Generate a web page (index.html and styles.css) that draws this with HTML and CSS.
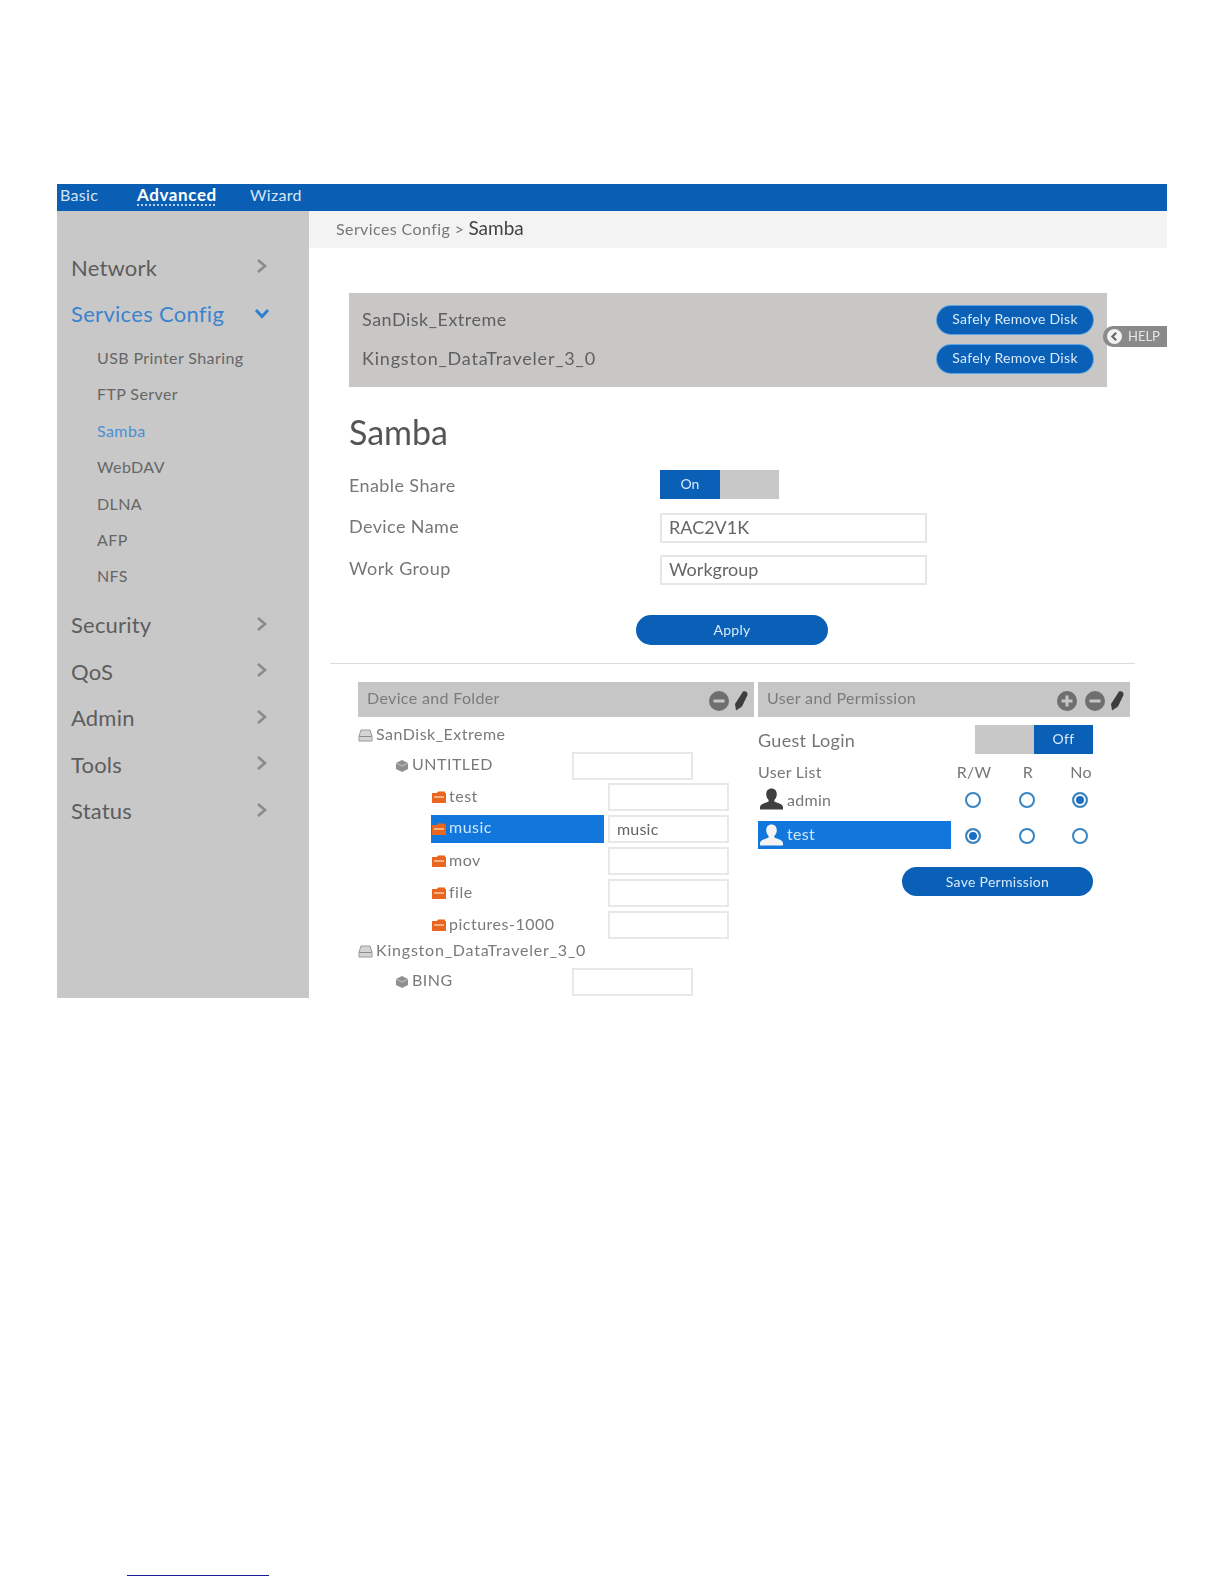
FILE: index.html
```html
<!DOCTYPE html>
<html lang="en">
<head>
<meta charset="utf-8">
<title>Samba</title>
<link rel="stylesheet" href="styles.css">
</head>
<body>
<svg class="defs" width="0" height="0" aria-hidden="true">
  <defs>
    <symbol id="i-right" viewBox="0 0 12 16"><path d="M2 2l7 6-7 6" fill="none" stroke="#8a8a8a" stroke-width="2.6"/></symbol>
    <symbol id="i-down" viewBox="0 0 16 12"><path d="M2 2l6 6.5L14 2" fill="none" stroke="#2f7fd0" stroke-width="3"/></symbol>
    <symbol id="i-disk" viewBox="0 0 15 13"><path d="M3 1h9l2 6v5H1V7z" fill="#d4d4d4" stroke="#9a9a9a"/><path d="M1.5 7.5h12" stroke="#8c8c8c"/></symbol>
    <symbol id="i-vol" viewBox="0 0 14 14"><path d="M7 1l6 3v6l-6 3-6-3V4z" fill="#8f8f8f"/><path d="M1 4l6 3 6-3" fill="none" stroke="#c4c4c4"/></symbol>
    <symbol id="i-folder" viewBox="0 0 14 12"><path d="M0 2h5l1-1.500h7V2h1v10H0z" fill="#e8661f"/><rect x="2" y="5" width="10" height="2" fill="#f6b27c"/></symbol>
    <symbol id="i-minus" viewBox="0 0 20 20"><circle cx="10" cy="10" r="10" fill="#6f6f6f"/><rect x="4.500" y="8.500" width="11" height="3" fill="#c6c6c6"/></symbol>
    <symbol id="i-plus" viewBox="0 0 20 20"><circle cx="10" cy="10" r="10" fill="#6f6f6f"/><path d="M4.500 8.500h4v-4h3v4h4v3h-4v4h-3v-4h-4z" fill="#c6c6c6"/></symbol>
    <symbol id="i-pen" viewBox="0 0 14 20"><path d="M9 .5c2.500-1 5 .5 4.500 3.500L8 15.500 2 19.500 1 13z" fill="#3d3d3d"/></symbol>
    <symbol id="i-user" viewBox="0 0 24 22"><path d="M12 0c3.500 0 5.500 2.500 5.500 6 0 2.500-1 4.500-2.500 6v1.500c3 1.500 8 2 9 5.500v3H0v-3c1-3.500 6-4 9-5.500V12C7.500 10.500 6.500 8.500 6.500 6c0-3.500 2-6 5.500-6z"/></symbol>
    <symbol id="i-back" viewBox="0 0 18 18"><circle cx="9" cy="9" r="9" fill="#f2f2f2"/><path d="M11 4.500L6.500 9l4.500 4.500" fill="none" stroke="#6a6a6a" stroke-width="2.800"/></symbol>
  </defs>
</svg>
<div class="page">
  <nav class="topbar">
    <a class="tab tab-basic">Basic</a>
    <a class="tab tab-advanced"><span>Advanced</span></a>
    <a class="tab">Wizard</a>
  </nav>
  <div class="main">
    <aside class="sidebar">
      <div class="nav-item"><span>Network</span><svg class="chev"><use href="#i-right"/></svg></div>
      <div class="nav-item nav-open"><span>Services Config</span><svg class="chev-down"><use href="#i-down"/></svg></div>
      <ul class="subnav">
        <li>USB Printer Sharing</li>
        <li>FTP Server</li>
        <li class="sub-active">Samba</li>
        <li>WebDAV</li>
        <li>DLNA</li>
        <li>AFP</li>
        <li>NFS</li>
      </ul>
      <div class="nav-item"><span>Security</span><svg class="chev"><use href="#i-right"/></svg></div>
      <div class="nav-item"><span>QoS</span><svg class="chev"><use href="#i-right"/></svg></div>
      <div class="nav-item"><span>Admin</span><svg class="chev"><use href="#i-right"/></svg></div>
      <div class="nav-item"><span>Tools</span><svg class="chev"><use href="#i-right"/></svg></div>
      <div class="nav-item"><span>Status</span><svg class="chev"><use href="#i-right"/></svg></div>
    </aside>
    <main class="content">
      <div class="crumbs"><span class="crumb-parent">Services Config &gt;</span> <span class="crumb-current">Samba</span></div>
      <div class="help"><svg class="help-icon"><use href="#i-back"/></svg>HELP</div>
      <section class="disks">
        <div class="disk-row"><span class="disk-name">SanDisk_Extreme</span><button class="pill pill-disk">Safely Remove Disk</button></div>
        <div class="disk-row"><span class="disk-name long-name">Kingston_DataTraveler_3_0</span><button class="pill pill-disk">Safely Remove Disk</button></div>
      </section>
      <h1 class="title">Samba</h1>
      <div class="form">
        <label class="label-first">Enable Share</label>
        <div class="toggle toggle-share"><span class="toggle-on">On</span><span class="toggle-rest"></span></div>
        <label>Device Name</label>
        <div class="field">RAC2V1K</div>
        <label>Work Group</label>
        <div class="field">Workgroup</div>
      </div>
      <button class="pill pill-apply">Apply</button>
      <hr class="divider">
      <div class="panels">
        <section class="panel-left">
          <header class="panel-head"><span class="head-text">Device and Folder</span><span class="head-icons"><svg class="ic-round"><use href="#i-minus"/></svg><svg class="ic-pen"><use href="#i-pen"/></svg></span></header>
          <div class="tree">
            <div class="tree-disk"><svg class="ic-disk"><use href="#i-disk"/></svg>SanDisk_Extreme</div>
            <div class="tree-vol"><svg class="ic-vol"><use href="#i-vol"/></svg>UNTITLED<span class="box"></span></div>
            <div class="tree-folder"><span class="f-name"><svg class="ic-folder"><use href="#i-folder"/></svg>test</span><span class="box"></span></div>
            <div class="tree-folder"><span class="f-name f-selected"><svg class="ic-folder"><use href="#i-folder"/></svg>music</span><span class="box">music</span></div>
            <div class="tree-folder"><span class="f-name"><svg class="ic-folder"><use href="#i-folder"/></svg>mov</span><span class="box"></span></div>
            <div class="tree-folder"><span class="f-name"><svg class="ic-folder"><use href="#i-folder"/></svg>file</span><span class="box"></span></div>
            <div class="tree-folder"><span class="f-name"><svg class="ic-folder"><use href="#i-folder"/></svg>pictures-1000</span><span class="box"></span></div>
            <div class="tree-disk long-name"><svg class="ic-disk"><use href="#i-disk"/></svg>Kingston_DataTraveler_3_0</div>
            <div class="tree-vol"><svg class="ic-vol"><use href="#i-vol"/></svg>BING<span class="box"></span></div>
          </div>
        </section>
        <section class="panel-right">
          <header class="panel-head"><span class="head-text">User and Permission</span><span class="head-icons"><svg class="ic-round"><use href="#i-plus"/></svg><svg class="ic-round"><use href="#i-minus"/></svg><svg class="ic-pen"><use href="#i-pen"/></svg></span></header>
          <div class="guest">
            <span>Guest Login</span>
            <div class="toggle toggle-off"><span class="toggle-rest"></span><span class="toggle-on">Off</span></div>
          </div>
          <div class="users">
            <div class="u-head u-name">User List</div><div class="u-head">R/W</div><div class="u-head">R</div><div class="u-head">No</div>
            <div class="u-name u-row"><svg class="ic-user"><use href="#i-user"/></svg>admin</div>
            <div class="u-cell"><span class="radio"></span></div><div class="u-cell"><span class="radio"></span></div><div class="u-cell"><span class="radio radio-on"></span></div>
            <div class="u-name u-row u-selected"><svg class="ic-user"><use href="#i-user"/></svg>test</div>
            <div class="u-cell"><span class="radio radio-on"></span></div><div class="u-cell"><span class="radio"></span></div><div class="u-cell"><span class="radio"></span></div>
          </div>
          <button class="pill pill-save">Save Permission</button>
        </section>
      </div>
    </main>
  </div>
</div>
<div class="footnote"></div>
</body>
</html>
```
FILE: styles.css
```css
* { box-sizing: border-box; }
html, body { margin: 0; background: #fff; }
body { font-family: "Lato", "Noto Sans", sans-serif; color: #666; height: 1584px; position: relative; overflow: hidden; }
.defs { position: absolute; }
.page { width: 1110px; margin-left: 57px; padding-top: 184px; filter: blur(0.6px); }

.topbar { height: 27px; background: #0a5fb4; display: flex; align-items: center; color: #d5e6f6; font-size: 16px; padding-bottom: 7px; letter-spacing: 0.3px; }
.tab { display: block; }
.tab-basic { margin-left: 3px; width: 77px; }
.tab-advanced { width: 113px; color: #fff; font-weight: 700; font-size: 17px; letter-spacing: 0.6px; }
.tab-advanced span { text-decoration: underline dotted #cfe3f5; text-underline-offset: 4px; }

.main { display: flex; height: 787px; }
.sidebar { width: 252px; background: #c8c8c8; padding-top: 34px; flex: none; }
.nav-item { height: 46.5px; padding: 0 0 0 14px; display: flex; align-items: center; justify-content: space-between; font-size: 22px; color: #5d5d5d; letter-spacing: 0.2px; }
.nav-item span { padding-bottom: 2px; }
.chev { width: 12px; height: 16px; margin-right: 41px; margin-bottom: 4px; }
.chev-down { width: 16px; height: 12px; margin-right: 39px; margin-bottom: 2px; }
.nav-open { color: #3a84cf; letter-spacing: 0.3px; }
.subnav { list-style: none; margin: 0; padding: 2px 0 8px 40px; font-size: 16px; color: #666; letter-spacing: 0.4px; }
.subnav li { height: 36.4px; line-height: 36.4px; }
.sub-active { color: #4a8fd4; }

.content { flex: 1; position: relative; overflow: hidden; }
.crumbs { height: 37px; line-height: 33px; padding-left: 27px; background: #f3f3f3; }
.crumb-parent { font-size: 16px; color: #777; letter-spacing: 0.4px; }
.crumb-current { font-size: 19px; color: #444; }
.help { position: absolute; right: 0; top: 115px; width: 64px; height: 21px; background: #8a8a8a; border-radius: 10px 0 0 10px; color: #e6e6e6; font-size: 13px; display: flex; align-items: center; gap: 6px; padding: 0 0 1px 4px; }
.help-icon { width: 15px; height: 15px; margin-top: 1px; }

.disks { margin: 45px 0 0 40px; width: 758px; height: 94px; background: #c9c7c6; padding: 13px 14px 13px 13px; display: flex; flex-direction: column; gap: 11px; }
.disk-row { display: flex; justify-content: space-between; align-items: center; font-size: 18px; color: #5f5f5f; height: 28px; letter-spacing: 0.5px; }
.disk-name { padding-bottom: 2px; }
.disk-row .long-name { letter-spacing: 0.8px; }
.pill { display: block; border: 0; border-radius: 15px; background: #0a60b6; color: #d8ebfb; font-family: inherit; font-size: 14px; padding: 0 0 2px; letter-spacing: 0.3px; }
.pill-disk { width: 156px; height: 28px; box-shadow: 0 0 0 1px #5aa5e6; padding-bottom: 4px; }

.title { margin: 24px 0 0 40px; font-size: 34px; line-height: 42px; font-weight: 400; color: #555; }
.form { margin: 17px 0 0 40px; display: grid; grid-template-columns: 311px 267px; grid-auto-rows: 30px; row-gap: 12.5px; align-items: center; font-size: 18px; }
.form label { color: #777; letter-spacing: 0.4px; padding-bottom: 4px; }
.form .label-first { padding-bottom: 1px; }
.toggle { display: flex; width: 118px; height: 29px; font-size: 14px; }
.toggle-share { width: 119px; margin-bottom: 2px; }
.toggle-on { width: 60px; background: #0a60b6; color: #d8ebfb; text-align: center; line-height: 28px; }
.toggle-off .toggle-on { width: 59px; }
.toggle-rest { flex: 1; background: #c8c8c8; }
.field { height: 30px; border: 2px solid #e6e6e6; padding-left: 7px; line-height: 25px; color: #666; }
.pill-apply { margin: 30px 0 0 327px; width: 192px; height: 30px; }
.divider { margin: 18px 0 0 21px; width: 805px; border: 0; border-top: 1px solid #dcdcdc; height: 1px; }

.panels { display: flex; gap: 4px; margin: 18px 0 0 49px; }
.panel-left { width: 396px; flex: none; }
.panel-right { width: 372px; flex: none; }
.panel-head { height: 35px; background: #c6c6c6; display: flex; justify-content: space-between; align-items: center; padding: 0 6px 0 9px; font-size: 16px; color: #7b7b7b; }
.head-text { padding-bottom: 4px; letter-spacing: 0.35px; }
.head-icons { display: flex; align-items: center; gap: 8px; padding-top: 3px; }
.ic-round { width: 20px; height: 20px; }
.ic-pen { width: 14px; height: 20px; margin-left: -3px; }

.tree { padding-top: 8px; font-size: 16px; color: #7a7a7a; letter-spacing: 0.5px; }
.tree-disk { height: 20px; margin-bottom: 5px; display: flex; align-items: center; gap: 3px; padding-bottom: 4px; }
.tree .long-name { letter-spacing: 0.8px; }
.ic-disk { width: 15px; height: 13px; margin-top: 4px; }
.tree-vol { height: 31px; display: flex; align-items: center; gap: 3px; padding-left: 37px; padding-bottom: 4px; width: 335px; }
.ic-vol { width: 14px; height: 14px; margin-top: 4px; }
.tree-vol .box { margin-top: 4px; }
.tree-folder { height: 32px; display: flex; align-items: center; padding-left: 73px; width: 371px; }
.f-name { width: 173px; height: 28px; display: flex; align-items: center; gap: 3px; padding: 0 0 4px 1px; }
.f-selected { background: #1177dd; color: #cfe6fb; padding-bottom: 6px; }
.ic-folder { width: 14px; height: 12px; margin-top: 4px; }
.f-selected .ic-folder { margin-top: 6px; }
.box { display: block; margin-left: auto; width: 121px; height: 28px; border: 2px solid #e8e8e8; padding-left: 7px; line-height: 23px; color: #666; letter-spacing: 0.2px; }

.guest { display: flex; justify-content: space-between; align-items: center; margin-top: 8px; width: 335px; font-size: 18px; color: #777; letter-spacing: 0.3px; }
.users { display: grid; grid-template-columns: 193px 44px 64px 42px; margin-top: 8px; font-size: 16px; color: #777; align-items: center; letter-spacing: 0.3px; }
.u-head { height: 20px; line-height: 20px; text-align: center; margin-bottom: 3px; padding-left: 2px; }
.u-head.u-name { text-align: left; padding-left: 0; }
.u-row { height: 28px; display: flex; align-items: center; gap: 4px; padding-left: 2px; }
.u-selected { background: #1177dd; color: #cfe6fb; margin-top: 8px; padding-bottom: 4px; }
.ic-user { width: 23px; height: 22px; fill: #3f3f3f; }
.u-selected .ic-user { fill: #f4f4f4; margin-top: 4px; }
.u-cell { display: flex; justify-content: center; align-items: center; height: 28px; padding-top: 2px; }
.u-cell:nth-last-child(-n+3) { margin-top: 8px; }
.radio { width: 16px; height: 16px; border-radius: 50%; border: 2.5px solid #3a85c0; background: #fff; }
.radio-on { background: #1a6fc4; box-shadow: inset 0 0 0 2px #fff; }
.pill-save { margin: 18px 0 0 144px; width: 191px; height: 29px; padding-bottom: 0; }

.footnote { position: absolute; left: 127px; top: 1575px; width: 142px; height: 1px; background: #1a1a9a; }
```
